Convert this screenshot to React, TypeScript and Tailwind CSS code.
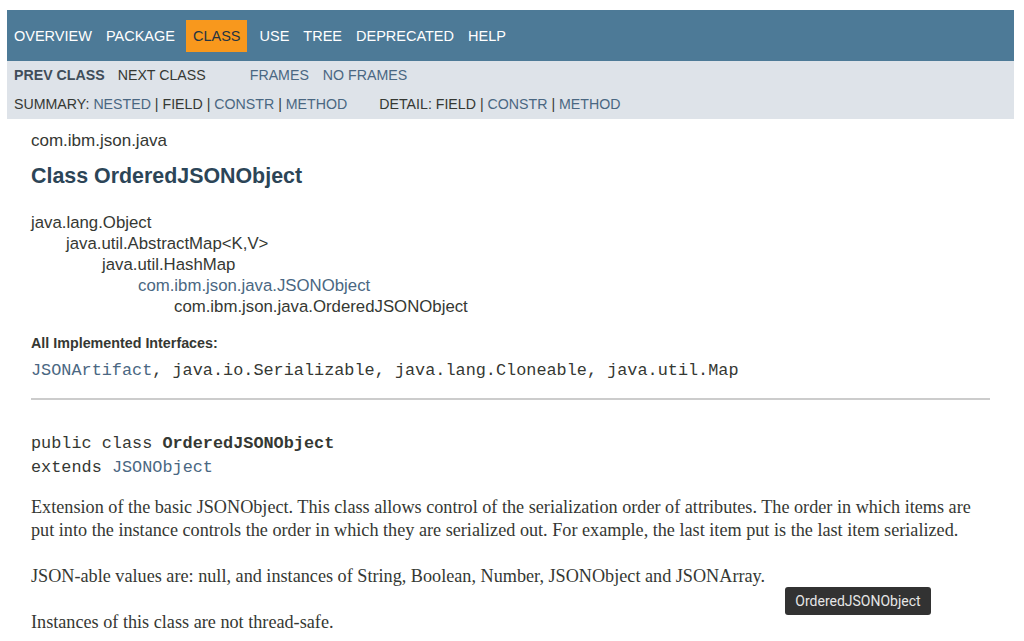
const navItems = ['OVERVIEW', 'PACKAGE', 'CLASS', 'USE', 'TREE', 'DEPRECATED', 'HELP'];

function Sep() {
  return <span className="text-[#353833]"> | </span>;
}

export default function App() {
  return (
    <div className="relative w-[1024px] h-[641px] overflow-hidden bg-white font-['Liberation_Sans',Arial,sans-serif] text-[#353833]">
      {/* Top navigation */}
      <div className="pt-[10px] pl-[7px] pr-[10px]">
        <ul className="flex items-center h-[51px] bg-[#4D7A97] text-[14.5px] leading-[16px] text-white">
          {navItems.map((item) =>
            item === 'CLASS' ? (
              <li key={item} className="ml-[4px] mr-[5px] px-[7px] py-[8px] bg-[#F8981D] text-[#253441]">
                {item}
              </li>
            ) : (
              <li key={item} className="px-[7px]">
                {item}
              </li>
            )
          )}
        </ul>

        {/* Sub navigation */}
        <div className="bg-[#DEE3E9] h-[58px] pt-[6px] text-[14.2px] leading-[16px]">
          <div className="flex pl-[7px]">
            <span className="font-bold text-[#404d5a]">PREV CLASS</span>
            <span className="ml-[13px]">NEXT CLASS</span>
            <span className="ml-[44px] text-[#4A6782]">FRAMES</span>
            <span className="ml-[14px] text-[#4A6782]">NO FRAMES</span>
          </div>
          <div className="flex pl-[7px] mt-[13px] whitespace-pre">
            <span>
              SUMMARY: <span className="text-[#4A6782]">NESTED</span>
              <Sep />FIELD<Sep />
              <span className="text-[#4A6782]">CONSTR</span>
              <Sep />
              <span className="text-[#4A6782]">METHOD</span>
            </span>
            <span className="ml-[32px]">
              DETAIL: FIELD<Sep />
              <span className="text-[#4A6782]">CONSTR</span>
              <Sep />
              <span className="text-[#4A6782]">METHOD</span>
            </span>
          </div>
        </div>
      </div>

      {/* Content */}
      <main className="pl-[31px] pr-[34px]">
        <div className="mt-[11px] text-[17px] leading-[22px]">com.ibm.json.java</div>
        <h2 className="mt-[11px] text-[21.4px] leading-[26px] font-bold text-[#2C4557]">Class OrderedJSONObject</h2>

        <div className="mt-[23px] text-[16.8px] leading-[21px]">
          <div>java.lang.Object</div>
          <div className="pl-[35px]">
            <div>java.util.AbstractMap&lt;K,V&gt;</div>
            <div className="pl-[36px]">
              <div>java.util.HashMap</div>
              <div className="pl-[36px]">
                <div className="text-[#4A6782]">com.ibm.json.java.JSONObject</div>
                <div className="pl-[36px]">com.ibm.json.java.OrderedJSONObject</div>
              </div>
            </div>
          </div>
        </div>

        <div className="mt-[17px] text-[14.3px] leading-[18px] font-bold">All Implemented Interfaces:</div>
        <div className="mt-[7px] font-['Liberation_Mono',monospace] text-[16.85px] leading-[24px]">
          <span className="text-[#4A6782]">JSONArtifact</span>, java.io.Serializable, java.lang.Cloneable, java.util.Map
        </div>

        <div className="mt-[15px] h-[2px] bg-[#CCCCCC]" />

        <div className="mt-[32px] font-['Liberation_Mono',monospace] text-[16.85px] leading-[24px]">
          <div>
            public class <span className="font-bold">OrderedJSONObject</span>
          </div>
          <div>
            extends <span className="text-[#4A6782]">JSONObject</span>
          </div>
        </div>

        <div className="font-['Liberation_Serif',serif] text-[18.2px] leading-[23px]">
          <p className="mt-[16px]">
            Extension of the basic JSONObject. This class allows control of the serialization order of attributes. The order in which items are
            <br />
            put into the instance controls the order in which they are serialized out. For example, the last item put is the last item serialized.
          </p>
          <p className="mt-[23px]">JSON-able values are: null, and instances of String, Boolean, Number, JSONObject and JSONArray.</p>
          <p className="mt-[23px]">Instances of this class are not thread-safe.</p>
        </div>
      </main>

      {/* Tooltip */}
      <div className="absolute left-[785px] top-[587px] h-[28px] w-[146px] flex items-center justify-center rounded-[3px] bg-[#323232] font-['Roboto',sans-serif] text-[14px] text-[#E6E6E6]">
        OrderedJSONObject
      </div>
    </div>
  );
}
